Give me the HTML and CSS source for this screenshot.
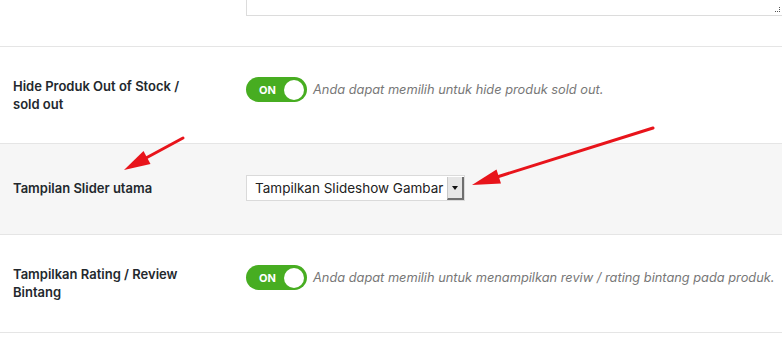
FILE: index.html
```html
<html lang="id">
<head>
  <meta charset="UTF-8">
  <title>Pengaturan Toko</title>
  <link rel="stylesheet" href="styles.css">
</head>
<body>
  <div class="settings">
    <div class="row row-top">
      <div class="label"></div>
      <div class="field">
        <div class="textarea"><span class="grip"></span></div>
      </div>
    </div>

    <div class="row">
      <div class="label">Hide Produk Out of Stock / sold out</div>
      <div class="field">
        <span class="toggle"><span class="toggle-text">ON</span><span class="knob"></span></span>
        <span class="desc">Anda dapat memilih untuk hide produk sold out.</span>
      </div>
    </div>

    <div class="row row-alt">
      <div class="label">Tampilan Slider utama</div>
      <div class="field">
        <div class="select">
          <span class="select-text">Tampilkan Slideshow Gambar</span>
          <span class="select-btn"><span class="caret"></span></span>
        </div>
      </div>
    </div>

    <div class="row row-last">
      <div class="label">Tampilkan Rating / Review Bintang</div>
      <div class="field">
        <span class="toggle"><span class="toggle-text">ON</span><span class="knob"></span></span>
        <span class="desc">Anda dapat memilih untuk menampilkan reviw / rating bintang pada produk.</span>
      </div>
    </div>

    <!-- anotasi panah merah -->
    <svg class="arrows" width="782" height="363" viewBox="0 0 782 363">
      <line x1="183" y1="138" x2="146" y2="158" stroke="#e8141b" stroke-width="3" stroke-linecap="round"/>
      <polygon points="124,170 150.5,164 143.5,151" fill="#e8141b"/>
      <line x1="653" y1="128" x2="497" y2="177" stroke="#e8141b" stroke-width="3" stroke-linecap="round"/>
      <polygon points="472,185 501,183.5 496.5,169.5" fill="#e8141b"/>
    </svg>
  </div>
</body>
</html>
```

FILE: styles.css
```css
body {
  margin: 0;
  background-color: #fff;
  font-family: Inter, "Noto Sans", sans-serif;
  color: #23282d;
  overflow: hidden;
}

.settings {
  position: relative;
  width: 782px;
  height: 363px;
}

.row {
  display: flex;
  align-items: flex-start;
  padding: 30px 0;
  border-bottom: 1px solid #e5e5e5;
}

.row-top {
  padding-top: 0;
}

.row-alt {
  background-color: #f6f6f6;
  padding: 31px 0 33px;
}

.row-last {
  padding-bottom: 31px;
}

.label {
  width: 233px;
  box-sizing: border-box;
  padding: 0 45px 0 13px;
  font-size: 13px;
  font-weight: 600;
  line-height: 18px;
}

.row-alt .label {
  padding-top: 4px;
}

.field {
  flex: 1;
  display: flex;
  align-items: center;
  padding-left: 13px;
}

.textarea {
  position: relative;
  width: 100%;
  height: 15px;
  margin-right: -2px;
  border: 1px solid #dcdcdc;
  border-top: none;
  background-color: #fff;
}

.grip {
  position: absolute;
  right: 3px;
  top: 7px;
  width: 4px;
  height: 4px;
  border-right: 1px dotted #555;
  border-bottom: 1px dotted #555;
}

.toggle {
  display: inline-flex;
  align-items: center;
  justify-content: space-between;
  width: 61px;
  height: 25px;
  box-sizing: border-box;
  padding: 0 3px 0 13px;
  border-radius: 13px;
  background-color: #47ad21;
}

.toggle-text {
  color: #fff;
  font-size: 11px;
  font-weight: 700;
}

.knob {
  width: 20px;
  height: 20px;
  border-radius: 50%;
  background-color: #fff;
}

.desc {
  margin-left: 6px;
  font-size: 12.8px;
  font-style: italic;
  color: #777;
  white-space: nowrap;
}

.select {
  display: flex;
  align-items: stretch;
  width: 219px;
  height: 26px;
  box-sizing: border-box;
  border: 1px solid #dadada;
  background-color: #fff;
}

.select-text {
  flex: 1;
  padding-left: 8px;
  font-size: 13.5px;
  line-height: 24px;
  color: #222;
  white-space: nowrap;
  overflow: hidden;
}

.select-btn {
  width: 14px;
  margin: 1px 0 0;
  display: flex;
  align-items: center;
  justify-content: center;
  background-color: #e6e6e6;
  border-left: 1px solid #c8c8c8;
  border-right: 2px solid #6e6e6e;
  border-bottom: 2px solid #6e6e6e;
}

.caret {
  width: 0;
  height: 0;
  border-left: 3px solid transparent;
  border-right: 3px solid transparent;
  border-top: 4px solid #111;
}

.arrows {
  position: absolute;
  left: 0;
  top: 0;
  pointer-events: none;
}
```
